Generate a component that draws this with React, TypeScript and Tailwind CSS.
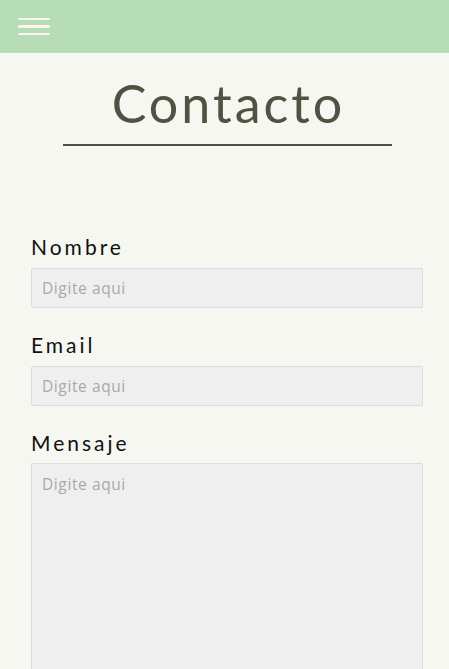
import * as React from 'react';

function Field({ label, children }: { label: string; children: React.ReactNode }) {
  return (
    <div className="flex flex-col">
      <label className="text-[21px] leading-[26px] tracking-[3px] text-[#111111]">{label}</label>
      <div className="mt-[8px]">{children}</div>
    </div>
  );
}

const inputCls =
  "w-full rounded-[2px] border border-[#dcdcdc] bg-[#efefef] px-[10px] font-['Open_Sans',sans-serif] text-[15.5px] tracking-[0.6px] outline-none placeholder:text-[#a9a9a9]";

export default function App() {
  return (
    <div className="min-h-[669px] bg-[#f5f7f0] font-['Lato',sans-serif]">
      <header className="flex h-[53px] items-center bg-[#b6ddb6] px-[18px]">
        <button className="flex w-[32px] flex-col gap-[5px]">
          <span className="h-[2.5px] w-full rounded-full bg-[#fdf6ec]" />
          <span className="h-[2.5px] w-full rounded-full bg-[#fdf6ec]" />
          <span className="h-[2.5px] w-full rounded-full bg-[#fdf6ec]" />
        </button>
      </header>

      <div className="flex flex-col items-center pl-[5px] pt-[20px]">
        <h1 className="pl-[3px] text-[52px] leading-[60px] tracking-[3px] text-[#4f5442]">Contacto</h1>
        <div className="mt-[11px] h-[2px] w-[329px] bg-[#4f5442]" />
      </div>

      <form className="flex flex-col gap-[24px] pl-[31px] pr-[26px] pt-[88px]">
        <Field label="Nombre">
          <input placeholder="Digite aqui" className={`h-[40px] ${inputCls}`} />
        </Field>
        <Field label="Email">
          <input placeholder="Digite aqui" className={`h-[40px] ${inputCls}`} />
        </Field>
        <Field label="Mensaje">
          <textarea placeholder="Digite aqui" className={`-mt-[1px] block h-[240px] resize-none py-[9px] ${inputCls}`} />
        </Field>
      </form>
    </div>
  );
}
